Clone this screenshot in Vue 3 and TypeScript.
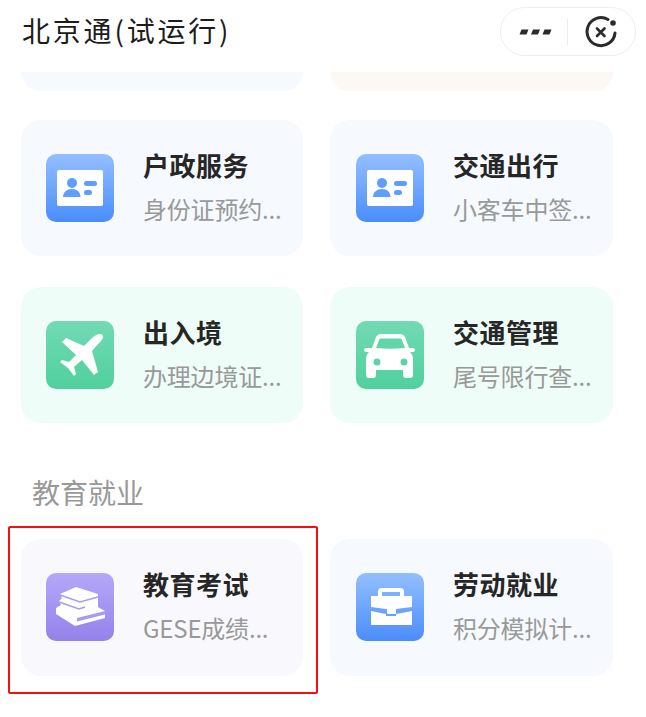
<script setup lang="ts">
type IconName = 'id' | 'plane' | 'car' | 'books' | 'case'

interface Service {
  title: string
  desc: string
  icon: IconName
  tone: 'blue' | 'green' | 'purple'
  selected?: boolean
}

interface Row {
  key: string
  heading?: string
  cards: Service[]
}

const rows: Row[] = [
  {
    key: 'a',
    cards: [
      { title: '户政服务', desc: '身份证预约...', icon: 'id', tone: 'blue' },
      { title: '交通出行', desc: '小客车中签...', icon: 'id', tone: 'blue' },
    ],
  },
  {
    key: 'b',
    cards: [
      { title: '出入境', desc: '办理边境证...', icon: 'plane', tone: 'green' },
      { title: '交通管理', desc: '尾号限行查...', icon: 'car', tone: 'green' },
    ],
  },
  {
    key: 'c',
    heading: '教育就业',
    cards: [
      { title: '教育考试', desc: 'GESE成绩...', icon: 'books', tone: 'purple', selected: true },
      { title: '劳动就业', desc: '积分模拟计...', icon: 'case', tone: 'blue' },
    ],
  },
]
</script>

<template>
  <div class="page">
    <header class="nav">
      <h1 class="nav-title">北京通(试运行)</h1>
      <div class="capsule">
        <svg width="33" height="6" viewBox="0 0 33 6">
          <path d="M2.500 .5h7l-2 5h-7zM14 .5h7l-2 5h-7zM25.500 .5h7l-2 5h-7z" fill="#2b2b2b" />
        </svg>
        <span class="capsule-line"></span>
        <svg width="34" height="34" viewBox="0 0 34 34">
          <path d="M24 4.500A14 14 0 1 0 31 18" fill="none" stroke="#2b2b2b" stroke-width="3" stroke-linecap="round" />
          <circle cx="29" cy="8" r="2.800" fill="#2b2b2b" />
          <path d="M13 13.500l7.500 7.500M20.500 13.500L13 21" stroke="#2b2b2b" stroke-width="2.600" stroke-linecap="round" />
        </svg>
      </div>
    </header>

    <div class="stub-row">
      <div class="stub stub-blue"></div>
      <div class="stub stub-pink"></div>
    </div>

    <template v-for="row in rows" :key="row.key">
      <h2 v-if="row.heading" class="section">{{ row.heading }}</h2>
      <div class="row" :class="'row-' + row.key">
        <div v-for="item in row.cards" :key="item.title" class="card" :class="'card-' + item.tone">
          <span v-if="item.selected" class="mark"></span>
          <div class="icon" :class="'icon-' + item.tone">
            <svg width="68" height="68" viewBox="0 0 68 68">
              <template v-if="item.icon === 'id'">
                <rect x="11" y="16" width="46" height="36" rx="2" fill="#fff" />
                <circle cx="26" cy="29" r="5" fill="#5f9efc" />
                <path d="M17 43c0-5 4-8 9-8s8.500 3 8.500 8z" fill="#5f9efc" />
                <rect x="38" y="27" width="13" height="5" rx="2.500" fill="#5f9efc" />
                <rect x="38" y="36" width="8" height="5" rx="2.500" fill="#5f9efc" />
              </template>
              <path
                v-else-if="item.icon === 'plane'"
                d="M46 17l-8 8-18-8-4 4 14 13-7 7-7-2-2 2 8 6 6 8 2-2-2-7 8-7 12 15 4-3-6-21 8-9c3-3 4-6 2-7.500s-6 0-10 3.500z"
                fill="#fff"
              />
              <template v-else-if="item.icon === 'car'">
                <path
                  d="M16 27l4-11c1-2 3-3 5-3h19c2 0 4 1 5 3l4 11h4c1 0 2 1 2 2s-1 2-2 2h-3c2 2 3 4 3 7v15c0 3-1 4-3 4h-4c-2 0-3-1-3-4v-4H20v4c0 3-1 4-3 4h-4c-2 0-3-1-3-4V38c0-3 1-5 3-7h-3c-1 0-2-1-2-2s1-2 2-2z"
                  fill="#fff"
                />
                <path d="M20 27l3-8c.5-1 1-1.500 2-1.500h19c1 0 1.500 .5 2 1.500l3 8c-10 1-19 1-29 0z" fill="#62d6aa" />
                <circle cx="21" cy="41" r="3.500" fill="#5cd3a4" />
                <circle cx="48" cy="41" r="3.500" fill="#5cd3a4" />
              </template>
              <template v-else-if="item.icon === 'books'">
                <path d="M30 14l22 7v13l7 4v7l-30 8-19-12v-6l5-3-2-4 3-3-2-4z" fill="#fff" />
                <path d="M14 22l20 7 18-5M13 29l20 7 6-2" fill="none" stroke="#ab9bf0" stroke-width="1.600" />
                <path d="M31 45l28-7v3.500l-28 7z" fill="#ab9bf0" />
              </template>
              <template v-else>
                <path d="M25 15h20c1.500 0 3 1.500 3 3v5h-4v-4H26v4h-4v-5c0-1.500 1.500-3 3-3z" fill="#fff" />
                <path d="M15 23h41v11l-16 2h-10l-15-2z" fill="#fff" />
                <path d="M15 38l15 3v2h10v-2l16-3v14H15z" fill="#fff" />
                <rect x="31" y="35" width="9" height="6" rx="1" fill="#fff" />
              </template>
            </svg>
          </div>
          <div class="text">
            <div class="card-title">{{ item.title }}</div>
            <div class="card-desc">{{ item.desc }}</div>
          </div>
        </div>
      </div>
    </template>
  </div>
</template>

<style>
html,
body {
  margin: 0;
  background: #fff;
}
</style>

<style scoped>
.page {
  width: 646px;
  height: 717px;
  overflow: hidden;
  background: #fff;
  font-family: 'Noto Sans CJK SC', 'Noto Sans', sans-serif;
}

.nav {
  height: 72px;
  display: flex;
  align-items: flex-start;
  justify-content: space-between;
  padding: 7px 10px 0 22px;
  box-sizing: border-box;
}

.nav-title {
  margin: 0;
  font-size: 28px;
  font-weight: 400;
  line-height: 47px;
  letter-spacing: 2.800px;
  color: #1c1c1c;
}

.capsule {
  width: 136px;
  height: 49px;
  box-sizing: border-box;
  border: 1px solid #eeeeee;
  border-radius: 25px;
  display: flex;
  align-items: center;
  padding-left: 18px;
}

.capsule-line {
  width: 1px;
  height: 26px;
  margin: 0 16px 0 15px;
  background: #ececec;
}

.stub-row {
  display: flex;
  gap: 27px;
  padding-left: 21px;
}

.stub {
  width: 282px;
  height: 19px;
  border-radius: 0 0 20px 20px;
}

.stub-pink {
  width: 283px;
  background: #fef8f5;
}

.stub-blue {
  background: #f6f9fe;
}

.row {
  display: flex;
  gap: 27px;
  padding-left: 21px;
}

.row-a {
  margin-top: 29px;
}

.row-b {
  margin-top: 31px;
}

.card {
  position: relative;
  width: 282px;
  height: 136px;
  box-sizing: border-box;
  border-radius: 20px;
  padding: 34px 0 0 25px;
  display: flex;
  gap: 29px;
}

.card:last-child {
  width: 283px;
  padding-left: 26px;
}

.row-c .card {
  height: 137px;
}

.card-blue {
  background: #f6f9fe;
}

.card-green {
  background: #effdf8;
}

.card-purple {
  background: #f8f8fd;
}

.icon {
  width: 68px;
  height: 68px;
  flex-shrink: 0;
  border-radius: 10px;
}

.icon svg {
  display: block;
}

.icon-blue {
  background: linear-gradient(180deg, #94bfff 0%, #4a8dfb 100%);
}

.icon-green {
  background: linear-gradient(180deg, #72dab4 0%, #50d09d 100%);
}

.icon-purple {
  background: linear-gradient(180deg, #b5a7fa 0%, #9482ea 100%);
}

.text {
  margin-top: -8px;
}

.card-title {
  font-size: 26px;
  font-weight: 700;
  line-height: 38px;
  letter-spacing: 0.500px;
  color: #262626;
}

.card-desc {
  margin-top: 8px;
  font-size: 24px;
  line-height: 34px;
  letter-spacing: -0.200px;
  color: #999999;
}

.section {
  margin: 46px 0 0 32px;
  height: 70px;
  font-size: 28px;
  font-weight: 400;
  line-height: 46px;
  color: #999999;
}

.mark {
  position: absolute;
  left: -13px;
  top: -13px;
  width: 310px;
  height: 168px;
  box-sizing: border-box;
  border: 2px solid #f50f0f;
  border-radius: 2px;
  pointer-events: none;
}
</style>
